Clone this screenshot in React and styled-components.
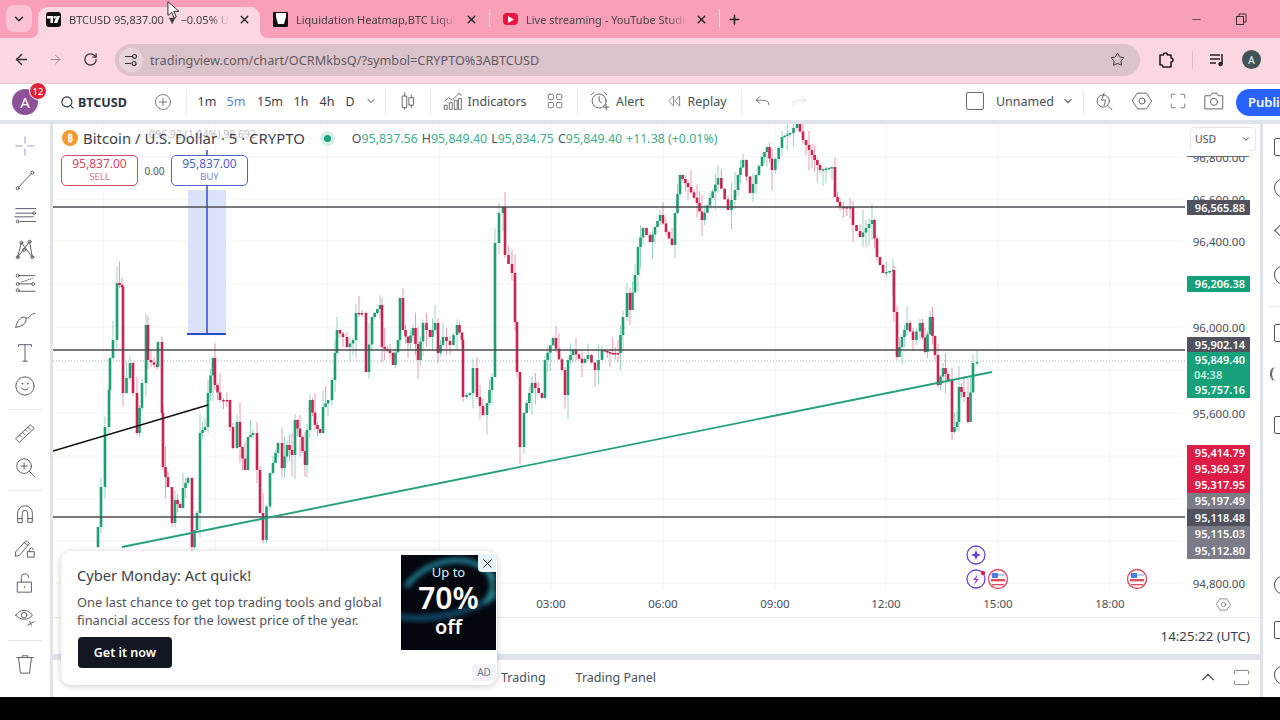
import React from 'react'
import styled, { createGlobalStyle } from 'styled-components'
import { ChevronDown, X, Plus, Minus, ArrowLeft, ArrowRight, RotateCw, Star, ChevronUp, Search } from 'lucide-react'

const UI = `"Noto Sans", "Liberation Sans", sans-serif`

const GlobalStyle = createGlobalStyle`
    html, body { margin: 0; padding: 0; background: #000; }
    * { box-sizing: border-box; }
    body { font-family: ${UI}; color: #2a2e39; }
`

// traced close prices, page coordinates
const PATH = [
    [95,547],[98,527],[101,487],[105,427],[109,390],[110,358],[113,340],[117,283],[122,287],[123,393],[130,363],[133,393],[137,433],[142,383],[146,325],[148,360],[157,367],[158,342],[162,413],[163,467],[168,487],[172,523],[175,500],[180,508],[183,488],[188,478],[192,547],[197,513],[200,433],[205,427],[208,393],[213,358],[215,385],[220,400],[227,400],[230,427],[233,448],[237,422],[240,447],[245,470],[248,437],[253,433],[257,470],[260,513],[263,540],[270,473],[273,463],[278,443],[282,468],[287,445],[292,455],[295,420],[300,437],[305,465],[307,430],[310,400],[315,425],[320,433],[323,407],[328,400],[332,380],[335,353],[337,330],[343,337],[347,347],[353,340],[356,313],[362,313],[366,372],[372,317],[380,305],[382,347],[390,353],[393,365],[398,340],[400,298],[403,330],[408,343],[413,328],[418,360],[423,323],[430,337],[435,323],[438,353],[443,337],[450,345],[457,325],[462,340],[463,397],[470,393],[473,368],[477,397],[483,415],[487,403],[492,377],[495,243],[499,213],[503,207],[505,255],[512,273],[515,322],[517,372],[520,447],[524,413],[532,383],[542,398],[545,360],[553,338],[562,370],[565,395],[568,360],[573,350],[582,363],[588,355],[595,370],[602,350],[610,353],[618,353],[623,317],[627,293],[630,310],[635,275],[638,247],[643,228],[650,242],[655,227],[660,215],[666,232],[672,245],[675,213],[680,175],[688,187],[697,203],[702,220],[710,198],[718,178],[728,210],[735,190],[738,175],[743,160],[750,193],[762,157],[767,147],[772,170],[782,137],[790,133],[797,123],[803,140],[812,155],[820,170],[832,167],[835,197],[840,207],[850,207],[853,225],[860,237],[866,228],[872,220],[877,257],[883,273],[893,270],[894,312],[897,357],[902,337],[907,323],[913,340],[920,323],[925,352],[930,317],[935,355],[938,385],[943,368],[948,380],[952,432],[957,422],[959,387],[964,397],[968,422],[973,363],[977,362],
]

function buildCandles() {
    const out = []
    let seed = 7
    const rnd = () => {
        seed = (seed * 16807) % 2147483647
        return seed / 2147483647
    }
    for (let i = 1; i < PATH.length; i++) {
        const [x0, y0] = PATH[i - 1]
        const [x1, y1] = PATH[i]
        const steps = Math.max(1, Math.round((x1 - x0) / 3.1))
        for (let s = 0; s < steps; s++) {
            const a = y0 + (y1 - y0) * (s / steps)
            const b = y0 + (y1 - y0) * ((s + 1) / steps)
            const x = x0 + (x1 - x0) * ((s + 1) / steps)
            const top = Math.min(a, b)
            const bottom = Math.max(a, b)
            out.push({
                x,
                top,
                h: Math.max(1.5, bottom - top),
                up: b < a,
                wickTop: top - rnd() * rnd() * 26,
                wickBottom: bottom + rnd() * rnd() * 26,
            })
        }
    }
    return out
}

const candles = buildCandles()
const GRID_X = [103, 215, 327, 439, 551, 663, 775, 886, 998, 1110]
const GRID_Y = [157, 199, 241, 284, 327, 370, 413, 456, 499, 541, 583]

function Plot() {
    return (
        <PlotSvg viewBox="53 124 1207 466">
            {GRID_X.map((x) => <line key={x} x1={x} x2={x} y1={124} y2={590} stroke="#f0f2f7" />)}
            {GRID_Y.map((y) => <line key={y} x1={53} x2={1183} y1={y} y2={y} stroke="#f0f2f7" />)}
            <rect x={188} y={190} width={38} height={144} fill="#dbe3fb" />
            <line x1={207} x2={207} y1={150} y2={334} stroke="#2a4fc4" strokeWidth="1.5" />
            <line x1={187} x2={226} y1={334} y2={334} stroke="#2a4fc4" strokeWidth="1.8" />
            <line x1={53} x2={1185} y1={361} y2={361} stroke="#9fb8ab" strokeDasharray="1 2" />
            {candles.map((c, i) => (
                <g key={i} fill={c.up ? '#1f9d75' : '#c9234f'}>
                    <rect x={c.x - 0.5} y={c.wickTop} width={1} height={c.wickBottom - c.wickTop} opacity="0.45" />
                    <rect x={c.x - 1.3} y={c.top} width={2.6} height={c.h} />
                </g>
            ))}
            {[207, 350, 517].map((y) => <line key={y} x1={53} x2={1185} y1={y} y2={y} stroke="#4b4b52" strokeWidth="1.5" />)}
            <line x1={53} y1={451} x2={208} y2={405} stroke="#111" strokeWidth="1.6" />
            <line x1={122} y1={547} x2={992} y2={372} stroke="#27a17c" strokeWidth="1.9" />
            <g fill="none" stroke="#6d3fd6" strokeWidth="1.3">
                <circle cx={976} cy={555} r={9} fill="#fff" />
                <circle cx={976} cy={579} r={9} fill="#fff" />
            </g>
            <path d="M976 550l1.4 3.6 3.6 1.4-3.6 1.4-1.4 3.6-1.4-3.6-3.6-1.4 3.6-1.4z" fill="#6d3fd6" />
            <path d="M978 574l-5 6h3l-2 5 5-6h-3z" fill="#a03ccf" />
            <circle cx={983} cy={573} r={2.2} fill="#d8233f" />
            <Flag x={998} />
            <Flag x={1137} />
        </PlotSvg>
    )
}

function Flag({ x }) {
    return (
        <g>
            <circle cx={x} cy={579} r={9.5} fill="#fff" stroke="#e04f62" strokeWidth="1.4" />
            <rect x={x - 7} y={574} width={14} height={2} fill="#b9cdf5" />
            <rect x={x - 6} y={573} width={6} height={5} fill="#4f7fe0" />
            <rect x={x - 7} y={579} width={14} height={2.4} fill="#e04f62" />
            <rect x={x - 6} y={584} width={12} height={1.4} fill="#e04f62" />
        </g>
    )
}

function Svg({ size = 22, children, w, h, vb }) {
    return (
        <svg width={w || size} height={h || size} viewBox={vb || '0 0 24 24'} fill="none" stroke="currentColor" strokeWidth="1" strokeLinecap="round" strokeLinejoin="round">
            {children}
        </svg>
    )
}

const leftIcons = [
    ['cross', <Svg key="a"><path d="M12 2v7M12 15v7M2 12h7M15 12h7" stroke="#8a97c8" /></Svg>],
    ['line', <Svg key="a"><path d="M5 20L19 5" /><circle cx="4" cy="21" r="1.6" /><circle cx="20" cy="4" r="1.6" /></Svg>],
    ['channel', <Svg key="a"><path d="M2 5h22M2 10h19M7 19h17M1 14h20" /><circle cx="22" cy="10" r="1.5" /><circle cx="4" cy="19" r="1.5" /></Svg>],
    ['pattern', <Svg key="a"><path d="M4 21L8 5l12 16L17 4 4 21z" /><circle cx="8" cy="5" r="1.6" /><circle cx="17" cy="4" r="1.6" /><circle cx="4" cy="21" r="1.6" /><circle cx="20" cy="21" r="1.6" /><circle cx="11" cy="13" r="1.6" /></Svg>],
    ['fib', <Svg key="a"><path d="M6 4h17M6 13h14M6 21h17" /><path d="M8 11l12-4" strokeDasharray="1 1.5" /><circle cx="4" cy="4" r="1.6" /><circle cx="4" cy="13" r="1.6" /><circle cx="4" cy="20" r="1.6" /><circle cx="21" cy="13" r="1.6" /></Svg>],
    ['brush', <Svg key="a"><path d="M2 22c1-6 4-10 8-11 3 0 4 2 3 4-1 4-6 7-11 7zM13 12c3 1 4-1 5-3 1-1 3-2 5-2" /></Svg>],
    ['text', <Svg key="a"><path d="M5 6V4h14v2M12 4v18M9.5 22h5" /></Svg>],
    ['smile', <Svg key="a"><circle cx="12" cy="12" r="10" /><path d="M8 14c2 3 6 3 8 0" /><circle cx="9" cy="9.5" r=".5" /><circle cx="15" cy="9.5" r=".5" /></Svg>],
    'sep',
    ['ruler', <Svg key="a"><path d="M2 18L18 3l4 4L6 22z" /><path d="M6 14l2 2M9 11l3 3M12 8l2 2M15 5.5l3 3" /></Svg>],
    ['zoom', <Svg key="a"><circle cx="11" cy="11" r="8" /><path d="M11 7.500v7M7.500 11h7M17 17l5 5" /></Svg>],
    'sep',
    ['magnet', <Svg key="a"><path d="M4 21V11a8 8 0 0 1 16 0v10h-5V11a3 3 0 0 0-6 0v10zM4 17h5M15 17h5" /></Svg>],
    ['pencil', <Svg key="a"><path d="M2 16L13 4l4 3L6 20l-4 1zM11 6l4 3" /><rect x="15" y="16" width="7" height="6" /><path d="M17 16v-2a2 2 0 0 1 4 0" /></Svg>],
    ['lock', <Svg key="a"><rect x="4" y="11" width="15" height="11" /><path d="M8 11V6a4 4 0 0 1 8 0M11.500 16v1" /></Svg>],
    ['eye', <Svg key="a"><path d="M2 10c4-7 14-7 18 0-4 6-14 6-18 0z" /><circle cx="11" cy="10" r="3" /><path d="M15 21l7-4M17 17l2 4" /></Svg>],
    'sep',
    ['trash', <Svg key="a"><path d="M3 5h18M9 5V3h6v2M5 5l2 17h10l2-17" /></Svg>],
]

const rightIcons = [
    [147, 'rect'], [188, 'clock'], [235, 'chev'], [275, 'clock'], 'sep', [333, 'rect'], [374, 'wave'], [425, 'rect'], [585, 'clock'], [630, 'rect'], [675, 'clock'],
]

const priceTicks = [
    ['96,800.00', 151], ['96,600.00', 193], ['96,400.00', 235], ['96,000.00', 321], ['95,600.00', 407], ['94,800.00', 577],
]

const priceTags = [
    { top: 200, h: 15, bg: '#50535e', t: '96,565.88' },
    { top: 276, h: 16, bg: '#16a17a', t: '96,206.38' },
    { top: 337, h: 15, bg: '#50535e', t: '95,902.14' },
    { top: 352, h: 15, bg: '#16a17a', t: '95,849.40' },
    { top: 367, h: 15, bg: '#16a17a', t: '04:38', soft: true },
    { top: 382, h: 16, bg: '#16a17a', t: '95,757.16' },
    { top: 445, h: 16, bg: '#dd1d48', t: '95,414.79' },
    { top: 461, h: 16, bg: '#dd1d48', t: '95,369.37' },
    { top: 477, h: 16, bg: '#dd1d48', t: '95,317.95' },
    { top: 493, h: 16, bg: '#7a7d87', t: '95,197.49' },
    { top: 509, h: 17, bg: '#50535e', t: '95,118.48' },
    { top: 526, h: 16, bg: '#7a7d87', t: '95,115.03' },
    { top: 542, h: 17, bg: '#7a7d87', t: '95,112.80' },
]

const times = [['03:00', 551], ['06:00', 663], ['09:00', 775], ['12:00', 886], ['15:00', 998], ['18:00', 1110]]
const intervals = [['1m', 207], ['5m', 236], ['15m', 270], ['1h', 301], ['4h', 327], ['D', 350]]

export default function App() {
    return (
        <Page>
            <GlobalStyle />
            <TabStrip>
                <TabMenu><ChevronDown size={14} strokeWidth={2.4} /></TabMenu>
                <ActiveTab>
                    <TvFavicon>
                        <svg width="13" height="9" viewBox="0 0 13 9" fill="#fff"><path d="M0 1h6v7H3.500V3.400H0z" /><circle cx="7.800" cy="2.300" r="1.300" /><path d="M7 8l2.600-7H13l-2.800 7z" /></svg>
                    </TvFavicon>
                    <TabTitle>BTCUSD 95,837.00 ▼ −0.05% Unnamed</TabTitle>
                    <TabClose><X size={13} strokeWidth={2.6} /></TabClose>
                </ActiveTab>
                <Tab>
                    <GlassFavicon><svg width="10" height="12" viewBox="0 0 10 12"><path d="M0 0h10v4L8 11H2L0 4z" fill="#fff" /></svg></GlassFavicon>
                    <TabTitle>Liquidation Heatmap,BTC Liquidation</TabTitle>
                    <TabClose><X size={13} strokeWidth={2.6} /></TabClose>
                </Tab>
                <TabDivider />
                <Tab>
                    <YtFavicon><svg width="7" height="7" viewBox="0 0 7 7"><path d="M1 0l6 3.500-6 3.500z" fill="#fff" /></svg></YtFavicon>
                    <TabTitle>Live streaming - YouTube Studio</TabTitle>
                    <TabClose><X size={13} strokeWidth={2.6} /></TabClose>
                </Tab>
                <TabDivider />
                <NewTab><Plus size={15} strokeWidth={2.4} /></NewTab>
                <WindowControls>
                    <Minus size={13} strokeWidth={1.4} />
                    <svg width="12" height="12" viewBox="0 0 12 12" fill="none" stroke="#333"><rect x="1.500" y="3.500" width="7" height="8" /><path d="M4 3V1h7v8H9" /></svg>
                </WindowControls>
            </TabStrip>

            <ChromeBar>
                <NavIcon $w={22}><ArrowLeft size={17} strokeWidth={2} /></NavIcon>
                <NavIcon $w={46} $muted><ArrowRight size={15} strokeWidth={1.6} /></NavIcon>
                <NavIcon $w={24}><RotateCw size={15} strokeWidth={2} /></NavIcon>
                <AddressBar>
                    <SiteInfo>
                        <svg width="14" height="14" viewBox="0 0 14 14" fill="none" stroke="#333" strokeWidth="1.2"><path d="M1 3.500h7M1 10.500h6" /><circle cx="10.500" cy="3.500" r="2" /><circle cx="10" cy="10.500" r="2" /></svg>
                    </SiteInfo>
                    <Url>tradingview.com/chart/OCRMkbsQ/?symbol=CRYPTO%3ABTCUSD</Url>
                    <Star size={15} strokeWidth={1.6} color="#333" />
                </AddressBar>
                <ChromeActions>
                    <svg width="18" height="18" viewBox="0 0 18 18" fill="none" stroke="#222" strokeWidth="1.6" strokeLinejoin="round"><path d="M3 4h3.500a2 2 0 0 1 4 0H14v3a2 2 0 0 1 0 4v5H6a2 2 0 0 0-3-2z" /></svg>
                    <ChromeDivider />
                    <svg width="16" height="14" viewBox="0 0 16 14" fill="none" stroke="#222" strokeWidth="1.5"><path d="M1 2h10M1 6h10M1 10h6M13 1v10" /><circle cx="11.500" cy="11" r="1.500" fill="#222" /></svg>
                    <ProfileDot>A</ProfileDot>
                </ChromeActions>
            </ChromeBar>

            <TvHeader>
                <HeaderCell $w={50}>
                    <Avatar>A<AvatarBadge>12</AvatarBadge></Avatar>
                </HeaderCell>
                <SymbolCell><Search size={15} strokeWidth={1.8} />BTCUSD</SymbolCell>
                <HeaderCell $w={46} $ml={0}>
                    <Svg size={18}><circle cx="12" cy="12" r="10" /><path d="M12 7v10M7 12h10" /></Svg>
                </HeaderCell>
                <HeaderSep />
                {intervals.map(([label, x], i) => (
                    <Interval key={label} $left={x} $active={i === 1}>{label}</Interval>
                ))}
                <IntervalChevron><ChevronDown size={12} /></IntervalChevron>
                <HeaderSep $at={385} />
                <HeaderIcon $at={408}>
                    <Svg size={20}><path d="M8 2v4M8 20v2M16 5v3M16 17v3" /><rect x="5.500" y="6" width="5" height="14" /><rect x="13.500" y="8" width="5" height="9" /></Svg>
                </HeaderIcon>
                <HeaderSep $at={430} />
                <HeaderIcon $at={453}>
                    <Svg size={20}><path d="M2 12l5-4 4 3 8-8M19 3l3 2" /><rect x="2" y="17" width="3" height="5" /><rect x="8" y="14" width="3" height="8" /><rect x="14" y="11" width="3" height="11" /><rect x="19" y="9" width="3" height="13" /></Svg>
                </HeaderIcon>
                <HeaderText $at={497}>Indicators</HeaderText>
                <HeaderIcon $at={555}>
                    <Svg size={18}><rect x="3" y="3" width="7" height="7" rx="1.500" /><rect x="14" y="3" width="7" height="7" rx="1.500" /><rect x="3" y="14" width="7" height="7" rx="1.500" /><rect x="14" y="14" width="7" height="7" rx="1.500" /></Svg>
                </HeaderIcon>
                <HeaderSep $at={577} />
                <HeaderIcon $at={600}>
                    <Svg size={21}><circle cx="11" cy="12" r="8" /><path d="M11 7v5l3 2M2 5l3-3M20 5l-3-3M19 16v6M16 19h6" /></Svg>
                </HeaderIcon>
                <HeaderText $at={630}>Alert</HeaderText>
                <HeaderIcon $at={674}>
                    <Svg size={16}><path d="M11 5l-7 7 7 7zM20 5l-7 7 7 7z" /></Svg>
                </HeaderIcon>
                <HeaderText $at={707}>Replay</HeaderText>
                <HeaderSep $at={741} />
                <HeaderIcon $at={763}>
                    <Svg size={18}><path d="M8 6l-5 5 5 4M3 11h12a6 6 0 0 1 5 6" /></Svg>
                </HeaderIcon>
                <HeaderIcon $at={799} $faint>
                    <Svg size={18}><path d="M16 6l5 5-5 4M21 11H9a6 6 0 0 0-5 6" /></Svg>
                </HeaderIcon>
                <LayoutBox />
                <HeaderText $at={1025}>Unnamed</HeaderText>
                <HeaderIcon $at={1068}><ChevronDown size={13} /></HeaderIcon>
                <HeaderSep $at={1083} />
                <HeaderIcon $at={1105}>
                    <Svg size={21}><circle cx="10" cy="12" r="7" /><path d="M11 3l-3 8h5l-2 6M15 17l5 5" /></Svg>
                </HeaderIcon>
                <HeaderIcon $at={1142}>
                    <Svg size={21}><path d="M7 3h10l6 9-6 9H7l-6-9z" /><circle cx="12" cy="12" r="3.500" /></Svg>
                </HeaderIcon>
                <HeaderIcon $at={1178}>
                    <Svg size={18}><path d="M3 8V4a1 1 0 0 1 1-1h4M16 3h4a1 1 0 0 1 1 1v4M21 16v4a1 1 0 0 1-1 1h-4M8 21H4a1 1 0 0 1-1-1v-4" /></Svg>
                </HeaderIcon>
                <HeaderIcon $at={1214}>
                    <Svg size={21}><path d="M2 6h6l2-3h5l2 3h5v15H2z" /><circle cx="12" cy="13" r="4" /></Svg>
                </HeaderIcon>
                <PublishButton>Publish</PublishButton>
            </TvHeader>

            <Workspace>
                <LeftBar>
                    {leftIcons.map((it, i) => (it === 'sep'
                        ? <ToolSep key={i} />
                        : <ToolIcon key={it[0]}>{it[1]}</ToolIcon>))}
                </LeftBar>
                <Center>
                    <ChartPane>
                        <ChartCanvas>
                            <Plot />
                            <GhostLabel>096.92 (1.04%) 98,692</GhostLabel>
                            <Legend>
                                <CoinIcon>₿</CoinIcon>
                                <LegendTitle>Bitcoin / U.S. Dollar · 5 · CRYPTO</LegendTitle>
                                <LiveDot />
                                <Ohlc>
                                    <span><b>O</b>95,837.56</span>
                                    <span><b>H</b>95,849.40</span>
                                    <span><b>L</b>95,834.75</span>
                                    <span><b>C</b>95,849.40</span>
                                    <span>+11.38 (+0.01%)</span>
                                </Ohlc>
                            </Legend>
                            <TradeRow>
                                <TradeBox $c="#d8475f">95,837.00<small>SELL</small></TradeBox>
                                <Spread>0.00</Spread>
                                <TradeBox $c="#4f63c9">95,837.00<small>BUY</small></TradeBox>
                            </TradeRow>
                            {priceTicks.map(([t, top]) => <PriceTick key={t} $top={top}>{t}</PriceTick>)}
                            <CurrencySelect>USD<ChevronDown size={10} strokeWidth={2.4} /></CurrencySelect>
                            {priceTags.map((p) => (
                                <PriceTag key={p.t} $top={p.top} $h={p.h} $bg={p.bg} $soft={p.soft}>{p.t}</PriceTag>
                            ))}
                        </ChartCanvas>
                        <TimeAxis>
                            {times.map(([t, x]) => <TimeLabel key={t} $x={x}>{t}</TimeLabel>)}
                            <AxisGear>
                                <Svg size={15}><path d="M7 3h10l6 9-6 9H7l-6-9z" /><circle cx="12" cy="12" r="3.500" /></Svg>
                            </AxisGear>
                        </TimeAxis>
                        <StatusRow>14:25:22 (UTC)</StatusRow>
                    </ChartPane>
                    <BottomBar>
                        <BottomTab $first>Trading</BottomTab>
                        <BottomTab>Trading Panel</BottomTab>
                        <BottomIcons>
                            <ChevronUp size={22} strokeWidth={1.2} />
                            <Svg size={17}><path d="M2 7V4a2 2 0 0 1 2-2h16a2 2 0 0 1 2 2v3M22 17v3a2 2 0 0 1-2 2H4a2 2 0 0 1-2-2v-3" /></Svg>
                        </BottomIcons>
                    </BottomBar>
                    <AdCard>
                        <AdCopy>
                            <AdTitle>Cyber Monday: Act quick!</AdTitle>
                            <AdText>One last chance to get top trading tools and global financial access for the lowest price of the year.</AdText>
                            <AdButton>Get it now</AdButton>
                        </AdCopy>
                        <AdPicture>
                            <AdSwirl viewBox="0 0 95 95">
                                <defs><filter id="b"><feGaussianBlur stdDeviation="2.5" /></filter></defs>
                                <g filter="url(#b)" fill="none" strokeLinecap="round" opacity="0.75">
                                    <path d="M6 30C30 2 70 -4 92 22" stroke="#2aa9c4" strokeWidth="5" />
                                    <path d="M0 62C30 66 70 58 95 40" stroke="#155f86" strokeWidth="6" />
                                    <path d="M80 10c14 10 14 24 6 36" stroke="#3fd0d8" strokeWidth="4" />
                                </g>
                            </AdSwirl>
                            <AdOffer>
                                <span>Up to</span>
                                <strong>70%</strong>
                                <em>off</em>
                            </AdOffer>
                        </AdPicture>
                        <AdClose><X size={15} strokeWidth={1.6} /></AdClose>
                        <AdBadge>AD</AdBadge>
                    </AdCard>
                </Center>
                <RightBar>
                    {rightIcons.map((it, i) => (it === 'sep'
                        ? <RightSep key={i} />
                        : <RightGlyph key={i} $top={it[0]} $kind={it[1]} />))}
                </RightBar>
            </Workspace>
            <Letterbox />
            <Cursor viewBox="0 0 14 20">
                <path d="M1 1v15l4-3.500 2.500 6 2.500-1-2.500-6H13z" fill="#fff" stroke="#222" strokeWidth="1" />
            </Cursor>
        </Page>
    )
}

const Page = styled.div`
    position: relative;
    width: 1280px;
    height: 720px;
    overflow: hidden;
    display: flex;
    flex-direction: column;
    background: #000;
`

const TabStrip = styled.div`
    height: 38px;
    flex: none;
    display: flex;
    align-items: flex-end;
    background: #f9a0b8;
    font-size: 11px;
    color: #444;
`

const TabMenu = styled.div`
    width: 26px;
    height: 27px;
    margin: 0 6px 6px;
    border-radius: 8px;
    background: #fbc3d3;
    display: flex;
    align-items: center;
    justify-content: center;
    color: #222;
`

const Tab = styled.div`
    width: 229px;
    height: 31px;
    padding: 0 11px 7px 13px;
    display: flex;
    align-items: center;
`

const ActiveTab = styled(Tab)`
    position: relative;
    width: 222px;
    padding: 0 9px 7px 8px;
    background: #fcd6e1;
    border-radius: 10px 10px 0 0;

    &::before,
    &::after {
        content: '';
        position: absolute;
        bottom: 0;
        width: 8px;
        height: 8px;
    }
    &::before {
        left: -8px;
        background: radial-gradient(circle at 0 0, transparent 8px, #fcd6e1 8.5px);
    }
    &::after {
        right: -8px;
        background: radial-gradient(circle at 100% 0, transparent 8px, #fcd6e1 8.5px);
    }
`

const TabTitle = styled.span`
    flex: 1;
    margin: 0 8px;
    white-space: nowrap;
    overflow: hidden;
    mask-image: linear-gradient(to right, #000 88%, transparent);
`

const TabClose = styled.span`
    display: flex;
    color: #222;
`

const Favicon = styled.span`
    width: 15px;
    height: 15px;
    flex: none;
    border-radius: 3px;
    display: flex;
    align-items: center;
    justify-content: center;
`

const TvFavicon = styled(Favicon)`
    background: #111;
`

const GlassFavicon = styled(Favicon)`
    background: #111;
    border-radius: 1px;
`

const YtFavicon = styled(Favicon)`
    background: #e5173f;
    height: 12px;
    border-radius: 4px;
`

const TabDivider = styled.i`
    width: 1px;
    height: 18px;
    margin-bottom: 11px;
    background: #fde0e8;
`

const NewTab = styled.div`
    width: 28px;
    height: 31px;
    padding-bottom: 7px;
    display: flex;
    align-items: center;
    justify-content: center;
    color: #222;
`

const WindowControls = styled.div`
    margin-left: auto;
    width: 90px;
    height: 38px;
    padding-right: 33px;
    display: flex;
    align-items: center;
    justify-content: space-between;
    color: #333;
`

const ChromeBar = styled.div`
    height: 46px;
    flex: none;
    padding: 0 0 2px 10px;
    display: flex;
    align-items: center;
    background: #fcd6e1;
    border-bottom: 1px solid #e9c7d0;
`

const NavIcon = styled.div`
    width: ${(p) => p.$w}px;
    display: flex;
    justify-content: center;
    color: ${(p) => (p.$muted ? '#9a8a8f' : '#333')};
`

const AddressBar = styled.div`
    width: 1025px;
    height: 32px;
    margin-left: 13px;
    padding-right: 15px;
    border-radius: 16px;
    background: #dcc2ca;
    display: flex;
    align-items: center;
`

const SiteInfo = styled.div`
    width: 24px;
    height: 24px;
    margin: 0 5px 0 4px;
    border-radius: 50%;
    background: #e9d3da;
    display: flex;
    align-items: center;
    justify-content: center;
`

const Url = styled.div`
    flex: 1;
    margin-left: 2px;
    font-size: 12.7px;
    color: #625c62;
`

const ChromeActions = styled.div`
    flex: 1;
    padding: 0 19px 0 17px;
    display: flex;
    align-items: center;
    justify-content: space-between;
`

const ChromeDivider = styled.i`
    width: 1px;
    height: 18px;
    background: #e8b8c6;
`

const ProfileDot = styled.div`
    width: 19px;
    height: 19px;
    border-radius: 50%;
    background: #3f5358;
    color: #fff;
    font-size: 10px;
    display: flex;
    align-items: center;
    justify-content: center;
`

const TvHeader = styled.div`
    position: relative;
    height: 36px;
    flex: none;
    display: flex;
    align-items: center;
    background: #fff;
    font-size: 12.5px;
    color: #4a4e58;
`

const HeaderCell = styled.div`
    width: ${(p) => p.$w}px;
    display: flex;
    align-items: center;
    justify-content: center;
    color: #50535e;
`

const Avatar = styled.div`
    position: relative;
    width: 26px;
    height: 26px;
    border-radius: 50%;
    background: #8c5199;
    color: #fff;
    font-size: 15px;
    display: flex;
    align-items: center;
    justify-content: center;
`

const AvatarBadge = styled.span`
    position: absolute;
    top: -7px;
    right: -9px;
    width: 18px;
    height: 18px;
    border-radius: 50%;
    border: 1.5px solid #fff;
    background: #e0243c;
    font-size: 9.5px;
    display: flex;
    align-items: center;
    justify-content: center;
`

const SymbolCell = styled.div`
    width: 90px;
    padding-left: 10px;
    display: flex;
    align-items: center;
    gap: 3px;
    font-size: 12.5px;
    font-weight: 700;
    color: #2e323c;
`

const HeaderSep = styled.i`
    position: absolute;
    left: ${(p) => p.$at || 186}px;
    top: 6px;
    width: 1px;
    height: 24px;
    background: #e6e8ee;
`

const HeaderItem = styled.div`
    position: absolute;
    top: 50%;
    transform: translate(-50%, calc(-50% - 1px));
    display: flex;
`

const Interval = styled(HeaderItem)`
    left: ${(p) => p.$left}px;
    font-size: 12.5px;
    color: ${(p) => (p.$active ? '#5f7fe8' : '#3b3f4a')};
`

const IntervalChevron = styled(HeaderItem)`
    left: 371px;
`

const HeaderIcon = styled(HeaderItem)`
    left: ${(p) => p.$at}px;
    color: ${(p) => (p.$faint ? '#d3d6dd' : '#50535e')};
`

const HeaderText = styled(HeaderItem)`
    left: ${(p) => p.$at}px;
`

const LayoutBox = styled(HeaderItem)`
    left: 975px;
    width: 18px;
    height: 18px;
    border: 1px solid #6a6d78;
    border-radius: 2px;
`

const PublishButton = styled.div`
    position: absolute;
    left: 1236px;
    top: 5px;
    width: 70px;
    height: 27px;
    padding-left: 12px;
    border-radius: 14px;
    background: #2962ff;
    color: #fff;
    font-size: 13px;
    font-weight: 600;
    line-height: 26px;
`

const Workspace = styled.div`
    height: 577px;
    flex: none;
    display: flex;
    gap: 3px;
    padding-top: 4px;
    background: #e0e3eb;
`

const LeftBar = styled.div`
    width: 50px;
    flex: none;
    padding-top: 5px;
    display: flex;
    flex-direction: column;
    align-items: center;
    background: #fff;
    color: #50535e;
`

const ToolIcon = styled.div`
    height: 34.3px;
    flex: none;
    display: flex;
    align-items: center;
    justify-content: center;
`

const ToolSep = styled.i`
    width: 34px;
    height: 1px;
    margin: 5.75px 0;
    flex: none;
    background: #e6e8ee;
`

const Center = styled.div`
    position: relative;
    width: 1207px;
    flex: none;
    display: flex;
    flex-direction: column;
    gap: 6px;
`

const ChartPane = styled.div`
    flex: none;
    background: #fff;
`

const ChartCanvas = styled.div`
    position: relative;
    height: 466px;
    overflow: hidden;
`

const PlotSvg = styled.svg`
    display: block;
    width: 1207px;
    height: 466px;
`

const GhostLabel = styled.div`
    position: absolute;
    left: 96px;
    top: 3px;
    font-size: 10.5px;
    color: #b9bcc4;
`

const Legend = styled.div`
    position: absolute;
    left: 9px;
    top: 4px;
    display: flex;
    align-items: center;
`

const CoinIcon = styled.span`
    width: 16px;
    height: 16px;
    border-radius: 50%;
    background: #f39a2e;
    color: #fff;
    font-size: 10px;
    font-weight: 700;
    display: flex;
    align-items: center;
    justify-content: center;
`

const LegendTitle = styled.span`
    margin-left: 5px;
    font-size: 14.9px;
    color: #3b3f4a;
`

const LiveDot = styled.i`
    width: 7px;
    height: 7px;
    margin: 0 21px 0 19px;
    border-radius: 50%;
    background: #14a37c;
    box-shadow: 0 0 0 4px #d6efe8;
`

const Ohlc = styled.span`
    display: flex;
    gap: 4px;
    font-size: 12.4px;
    color: #45ad8e;

    b {
        font-weight: 400;
        color: #50535e;
    }
`

const TradeRow = styled.div`
    position: absolute;
    left: 8px;
    top: 31px;
    display: flex;
    align-items: center;
`

const TradeBox = styled.div`
    width: 77px;
    height: 31px;
    border: 1px solid ${(p) => p.$c};
    border-radius: 5px;
    background: #fff;
    color: ${(p) => p.$c};
    font-size: 12px;
    line-height: 15px;
    text-align: center;

    small {
        display: block;
        font-size: 9.5px;
        line-height: 11px;
        opacity: 0.8;
    }
`

const Spread = styled.span`
    width: 33px;
    font-size: 10px;
    text-align: center;
    color: #50535e;
`

const CurrencySelect = styled.div`
    position: absolute;
    left: 1137px;
    top: 3px;
    width: 66px;
    height: 24px;
    padding: 0 4px;
    border: 1px solid #e6e8ee;
    border-radius: 4px;
    background: #fff;
    font-size: 10.5px;
    color: #4a4e58;
    display: flex;
    align-items: center;
    justify-content: space-between;

    /* the scale's top label slides under this strip */
    &::after {
        content: '';
        position: absolute;
        left: -4px;
        right: 6px;
        top: 100%;
        height: 6px;
        background: #fff;
        border-bottom: 1px solid #6a6d78;
    }
`

const PriceTick = styled.div`
    position: absolute;
    right: 15px;
    top: ${(p) => p.$top - 124}px;
    font-size: 11.5px;
    line-height: 14px;
    color: #4a4e58;
`

const PriceTag = styled.div`
    position: absolute;
    left: 1134px;
    top: ${(p) => p.$top - 124}px;
    width: 63px;
    height: ${(p) => p.$h}px;
    padding-right: 5px;
    background: ${(p) => p.$bg};
    color: ${(p) => (p.$soft ? '#c4ecdf' : '#fff')};
    font-size: 11px;
    font-weight: 600;
    line-height: ${(p) => p.$h}px;
    text-align: ${(p) => (p.$soft ? 'left' : 'right')};
    text-indent: ${(p) => (p.$soft ? '7px' : '0')};
`

const TimeAxis = styled.div`
    position: relative;
    height: 28px;
    border-bottom: 1px solid #e6e8ee;
`

const TimeLabel = styled.span`
    position: absolute;
    left: ${(p) => p.$x - 53}px;
    top: 6px;
    transform: translateX(-50%);
    font-size: 11.5px;
    color: #4a4e58;
`

const AxisGear = styled.span`
    position: absolute;
    left: 1163px;
    top: 7px;
    display: flex;
    color: #50535e;
`

const StatusRow = styled.div`
    height: 36px;
    padding-right: 10px;
    font-size: 13.3px;
    line-height: 36px;
    text-align: right;
    color: #3b3f4a;
`

const BottomBar = styled.div`
    flex: 1;
    display: flex;
    align-items: center;
    padding-bottom: 3px;
    background: #fff;
    font-size: 12.5px;
    color: #4a4e58;
`

const BottomTab = styled.span`
    margin-left: ${(p) => (p.$first ? '448px' : '30px')};
`

const BottomIcons = styled.div`
    margin-left: auto;
    width: 53px;
    margin-right: 10px;
    display: flex;
    align-items: center;
    justify-content: space-between;
`

const AdCard = styled.div`
    position: absolute;
    left: 8px;
    top: 427px;
    width: 436px;
    height: 134px;
    padding: 4px 1px 0 16px;
    display: flex;
    border-radius: 10px;
    background: #fff;
    box-shadow: 0 1px 6px rgba(40, 45, 60, 0.25);
`

const AdCopy = styled.div`
    width: 324px;
    padding-top: 9px;
`

const AdTitle = styled.div`
    font-size: 14.7px;
    line-height: 22px;
    color: #3b3f4a;
`

const AdText = styled.div`
    margin-top: 7px;
    font-size: 12.8px;
    line-height: 18px;
    color: #50535e;
`

const AdButton = styled.div`
    width: 94px;
    height: 31px;
    margin-top: 8px;
    margin-left: 1px;
    border-radius: 4px;
    background: #131722;
    color: #fff;
    font-size: 12.5px;
    font-weight: 600;
    line-height: 31px;
    text-align: center;
`

const AdPicture = styled.div`
    position: relative;
    width: 95px;
    height: 95px;
    overflow: hidden;
    background: #05070f;
`

const AdSwirl = styled.svg`
    position: absolute;
    inset: 0;
`

const AdOffer = styled.div`
    position: relative;
    display: flex;
    flex-direction: column;
    align-items: center;
    color: #fff;
    padding-top: 9px;

    span {
        font-size: 13px;
        line-height: 16px;
        color: #d8eef2;
    }
    strong {
        font-size: 30px;
        line-height: 36px;
        font-weight: 600;
    }
    em {
        font-size: 20px;
        line-height: 22px;
        font-style: normal;
        font-weight: 600;
    }
`

const AdClose = styled.div`
    position: absolute;
    right: 1px;
    top: 3px;
    width: 18px;
    height: 18px;
    background: #e9f2f5;
    border-radius: 0 0 0 4px;
    color: #222;
    display: flex;
    align-items: center;
    justify-content: center;
`

const AdBadge = styled.div`
    position: absolute;
    right: 1px;
    bottom: 4px;
    width: 24px;
    height: 17px;
    border-radius: 3px;
    background: #f0f3fa;
    color: #787b86;
    font-size: 10px;
    line-height: 17px;
    text-align: center;
`

const RightBar = styled.div`
    position: relative;
    flex: 1;
    background: #fff;
`

const RightSep = styled.i`
    position: absolute;
    left: 6px;
    top: 182px;
    width: 20px;
    height: 1px;
    background: #e6e8ee;
`

const RightGlyph = styled.i`
    position: absolute;
    left: ${(p) => (p.$kind === 'wave' ? 7 : p.$kind === 'chev' ? 13 : 11)}px;
    top: ${(p) => p.$top - 133}px;
    width: 16px;
    height: 18px;
    border: 1px solid transparent;
    ${(p) => (p.$kind === 'rect' ? 'border-color: #50535e; border-radius: 2px;' : '')}
    ${(p) => (p.$kind === 'clock' ? 'border-color: #50535e; border-radius: 50%;' : '')}
    ${(p) => (p.$kind === 'wave' ? 'border-left-color: #50535e; border-radius: 50%; box-shadow: inset 3px 0 0 -2px #50535e;' : '')}
    ${(p) => (p.$kind === 'chev' ? 'width: 9px; height: 9px; border-left-color: #50535e; border-top-color: #50535e; transform: rotate(-45deg);' : '')}
`

const Letterbox = styled.div`
    flex: 1;
    background: #000;
`

const Cursor = styled.svg`
    position: absolute;
    left: 167px;
    top: 0;
    width: 13px;
    height: 20px;
`
